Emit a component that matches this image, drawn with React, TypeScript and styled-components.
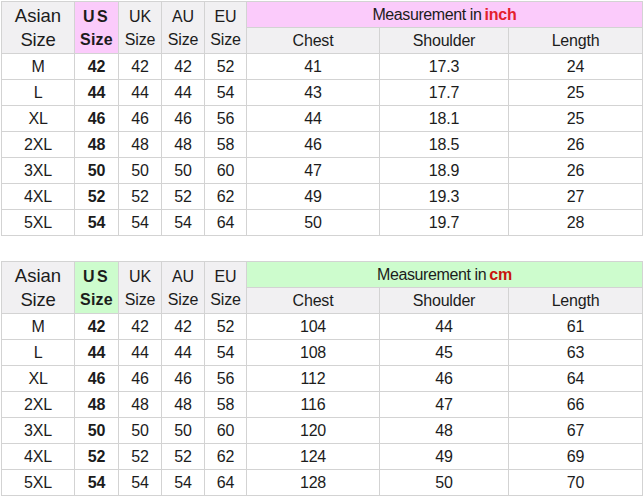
import React from 'react';
import styled, { createGlobalStyle } from 'styled-components';

const GlobalStyle = createGlobalStyle`
  html, body {
    margin: 0;
    padding: 0;
    background: #ffffff;
  }
  body {
    font-family: 'Liberation Sans', Arial, sans-serif;
    color: #1c1c1c;
  }
`;

type Unit = 'inch' | 'cm';

const accents: Record<Unit, { tint: string; word: string }> = {
  inch: { tint: '#fbcbfb', word: '#e4202e' },
  cm: { tint: '#cdfccd', word: '#c8140e' },
};

const sizes = ['M', 'L', 'XL', '2XL', '3XL', '4XL', '5XL'];
const us = [42, 44, 46, 48, 50, 52, 54];
const eu = [52, 54, 56, 58, 60, 62, 64];

const inchData = [
  ['41', '17.3', '24'],
  ['43', '17.7', '25'],
  ['44', '18.1', '25'],
  ['46', '18.5', '26'],
  ['47', '18.9', '26'],
  ['49', '19.3', '27'],
  ['50', '19.7', '28'],
];

const cmData = [
  ['104', '44', '61'],
  ['108', '45', '63'],
  ['112', '46', '64'],
  ['116', '47', '66'],
  ['120', '48', '67'],
  ['124', '49', '69'],
  ['128', '50', '70'],
];

const Page = styled.div`
  padding: 1px 0 0 1px;
  display: flex;
  flex-direction: column;
  gap: 25px;
`;

const Table = styled.table`
  border-collapse: collapse;
  table-layout: fixed;
  width: 641px;
`;

const Cell = styled.td<{ $bg?: string; $bold?: boolean }>`
  border: 1px solid #d3d3d3;
  padding: 0;
  text-align: center;
  vertical-align: middle;
  font-size: 16px;
  letter-spacing: -0.2px;
  height: 25px;
  background: ${(p) => p.$bg || '#ffffff'};
  font-weight: ${(p) => (p.$bold ? 700 : 400)};
  color: #1c1c1c;
  white-space: nowrap;
  line-height: 1;
`;

const HeadCell = styled(Cell)`
  background: ${(p) => p.$bg || '#f1f0f2'};
`;

const Stack = styled.div<{ $big?: boolean; $spaced?: boolean }>`
  display: flex;
  flex-direction: column;
  align-items: center;
  font-size: ${(p) => (p.$big ? '18.5px' : '16px')};
  line-height: ${(p) => (p.$big ? '24px' : '23px')};
  letter-spacing: ${(p) => (p.$spaced ? '0.2px' : '-0.2px')};
  span:first-child {
    letter-spacing: ${(p) => (p.$spaced ? '2.5px' : '0')};
  }
`;

const Word = styled.b<{ $color: string }>`
  color: ${(p) => p.$color};
  font-weight: 700;
  margin-left: 3px;
`;

const Title = styled.span`
  letter-spacing: -0.4px;
`;

const SizeTable: React.FC<{ unit: Unit; data: string[][] }> = ({ unit, data }) => {
  const a = accents[unit];
  return (
    <Table>
      <colgroup>
        <col style={{ width: 73 }} />
        <col style={{ width: 44 }} />
        <col style={{ width: 43 }} />
        <col style={{ width: 43 }} />
        <col style={{ width: 42 }} />
        <col style={{ width: 133 }} />
        <col style={{ width: 129 }} />
        <col style={{ width: 134 }} />
      </colgroup>
      <tbody>
        <tr>
          <HeadCell as="th" rowSpan={2}>
            <Stack $big>
              <span>Asian</span>
              <span>Size</span>
            </Stack>
          </HeadCell>
          <HeadCell as="th" rowSpan={2} $bg={a.tint} $bold>
            <Stack $spaced>
              <span>US</span>
              <span>Size</span>
            </Stack>
          </HeadCell>
          {['UK', 'AU', 'EU'].map((c) => (
            <HeadCell as="th" key={c} rowSpan={2}>
              <Stack>
                <span>{c}</span>
                <span>Size</span>
              </Stack>
            </HeadCell>
          ))}
          <HeadCell as="th" colSpan={3} $bg={a.tint}>
            <Title>Measurement in</Title>
            <Word $color={a.word}>{unit}</Word>
          </HeadCell>
        </tr>
        <tr>
          {['Chest', 'Shoulder', 'Length'].map((c) => (
            <HeadCell as="th" key={c}>
              {c}
            </HeadCell>
          ))}
        </tr>
        {sizes.map((s, i) => (
          <tr key={s}>
            <Cell>{s}</Cell>
            <Cell $bold>{us[i]}</Cell>
            <Cell>{us[i]}</Cell>
            <Cell>{us[i]}</Cell>
            <Cell>{eu[i]}</Cell>
            {data[i].map((v, j) => (
              <Cell key={j}>{v}</Cell>
            ))}
          </tr>
        ))}
      </tbody>
    </Table>
  );
};

export default function App() {
  return (
    <>
      <GlobalStyle />
      <Page>
        <SizeTable unit="inch" data={inchData} />
        <SizeTable unit="cm" data={cmData} />
      </Page>
    </>
  );
}
